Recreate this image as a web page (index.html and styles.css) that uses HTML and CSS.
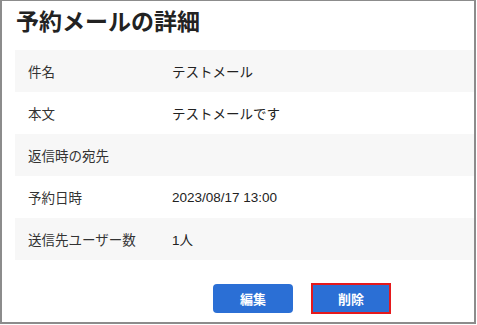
FILE: index.html
```html
<!DOCTYPE html>
<html lang="ja">
<head>
  <meta charset="utf-8">
  <title>予約メールの詳細</title>
  <link rel="stylesheet" href="styles.css">
</head>
<body>
  <div class="frame">
    <h1 class="page-title">予約メールの詳細</h1>

    <div class="detail-list">
      <div class="detail-row">
        <div class="detail-label">件名</div>
        <div class="detail-value">テストメール</div>
      </div>
      <div class="detail-row">
        <div class="detail-label">本文</div>
        <div class="detail-value">テストメールです</div>
      </div>
      <div class="detail-row">
        <div class="detail-label">返信時の宛先</div>
        <div class="detail-value"></div>
      </div>
      <div class="detail-row">
        <div class="detail-label">予約日時</div>
        <div class="detail-value">2023/08/17 13:00</div>
      </div>
      <div class="detail-row">
        <div class="detail-label">送信先ユーザー数</div>
        <div class="detail-value">1人</div>
      </div>
    </div>

    <div class="actions">
      <button class="btn">編集</button>
      <button class="btn btn-focused">削除</button>
    </div>
  </div>
</body>
</html>
```

FILE: styles.css
```css
body {
  margin: 0;
  background: #fff;
  font-family: "Liberation Sans", "Noto Sans CJK JP", sans-serif;
  color: #222;
}

.frame {
  width: 476px;
  height: 324px;
  box-sizing: border-box;
  border: 2px solid #8c8c8c;
  border-top-width: 1px;
  padding-left: 13px;
  overflow: hidden;
}

.page-title {
  margin: 3px 0 14px 1px;
  font-family: "Noto Sans CJK JP", sans-serif;
  font-size: 23px;
  line-height: 32px;
  font-weight: bold;
  color: #222;
}

.detail-row {
  display: flex;
  align-items: center;
  height: 42px;
  font-size: 13.5px;
  color: #333;
}

.detail-row:nth-child(odd) {
  background: #f7f7f7;
}

.detail-label {
  width: 144px;
  padding-left: 13px;
  flex-shrink: 0;
}

.detail-value {
  color: #222;
}

.actions {
  display: flex;
  gap: 18px;
  padding-left: 198px;
  margin-top: 24px;
}

.btn {
  width: 80px;
  height: 29px;
  border: 0;
  border-radius: 4px;
  background: #2b6fd5;
  color: #fff;
  font-family: "Noto Sans CJK JP", sans-serif;
  font-size: 13px;
  font-weight: bold;
  cursor: pointer;
}

.btn-focused {
  height: 31px;
  margin-top: -1px;
  border: 2px solid #e5191c;
  border-radius: 0;
}
```
